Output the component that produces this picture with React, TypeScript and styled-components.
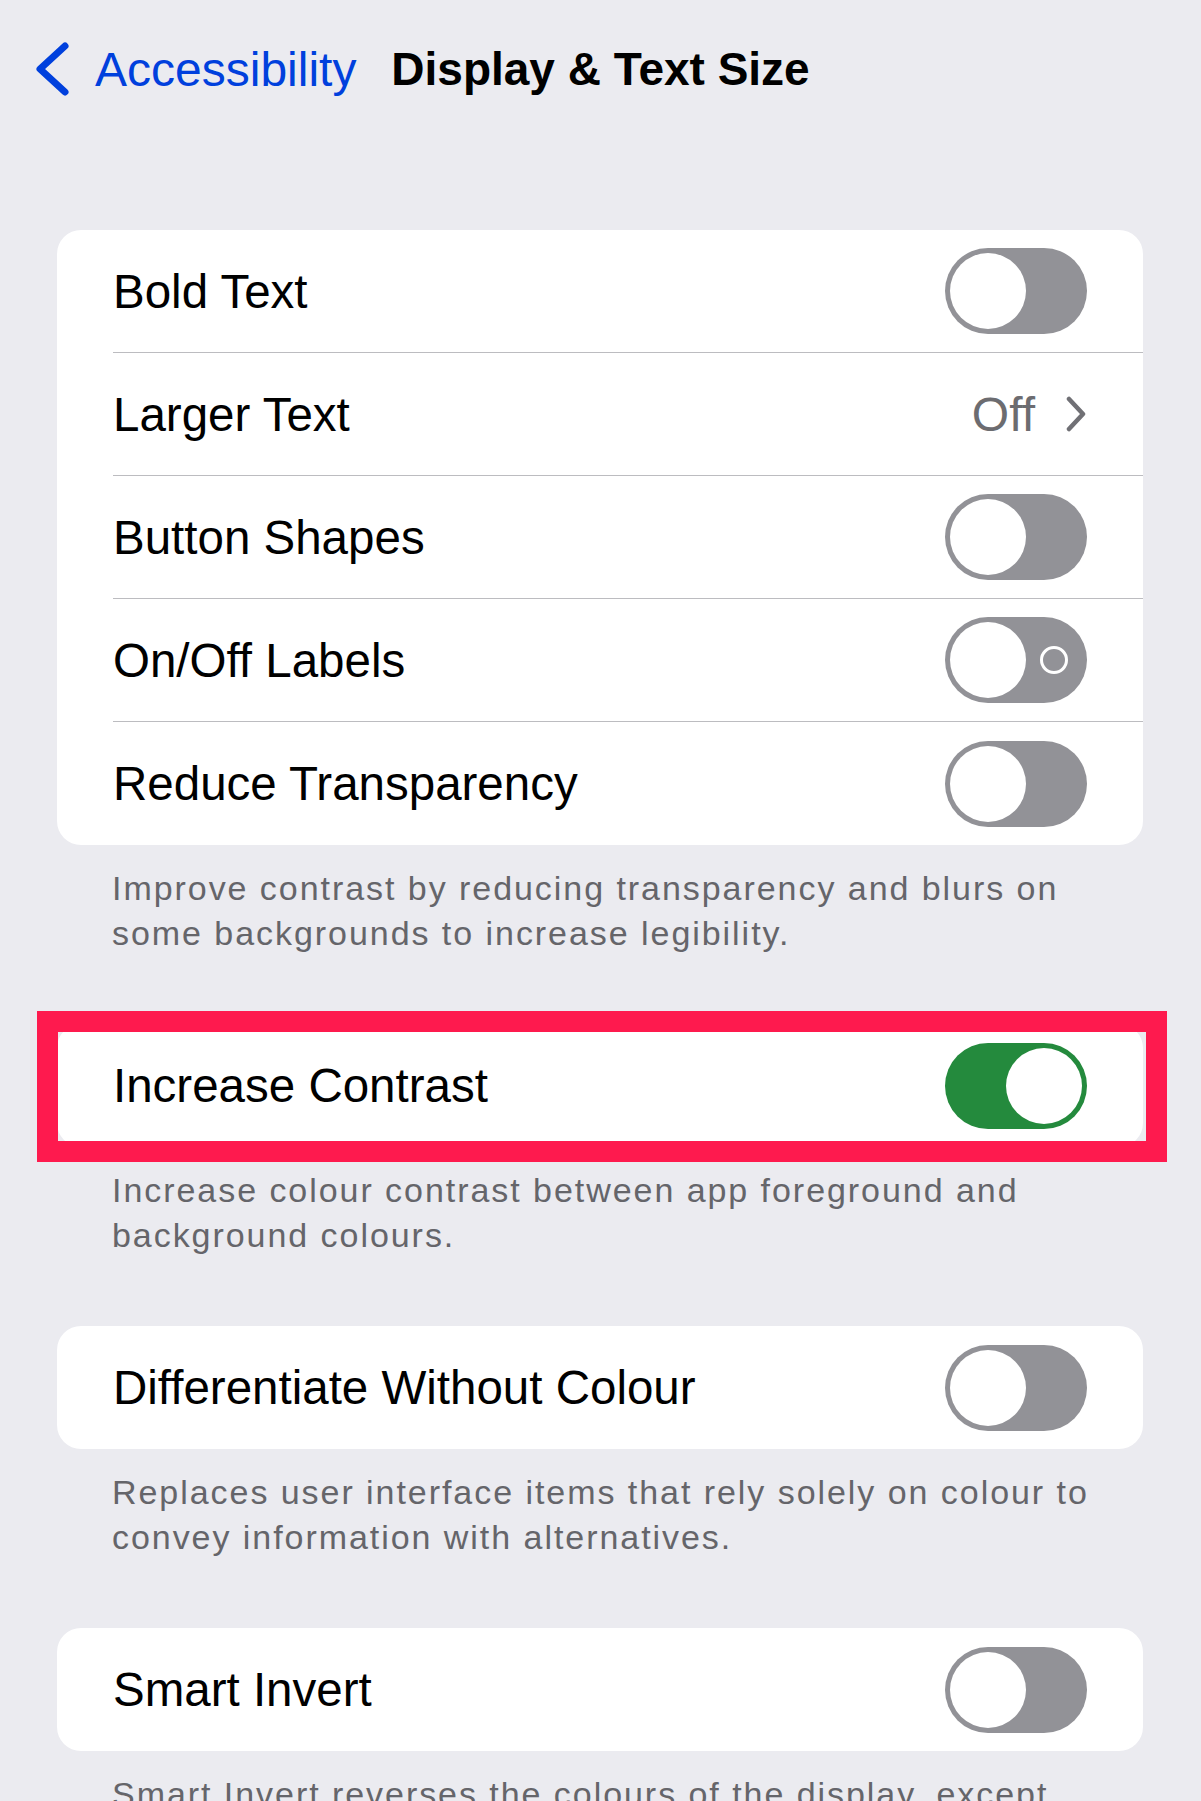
import React from "react";
import styled, { createGlobalStyle } from "styled-components";

const GlobalStyle = createGlobalStyle`
  html, body {
    margin: 0;
    padding: 0;
    background: #ebebf0;
    overflow: hidden;
  }
  body {
    font-family: "Liberation Sans", Arial, sans-serif;
    -webkit-font-smoothing: antialiased;
  }
  * { box-sizing: border-box; }
`;

const Screen = styled.div`
  width: 1201px;
  height: 1801px;
  overflow: hidden;
  background: #ebebf0;
  color: #000;
`;

const NavBar = styled.header`
  display: grid;
  grid-template-columns: 1fr auto 1fr;
  align-items: center;
  height: 138px;
`;

const BackButton = styled.button`
  justify-self: start;
  display: flex;
  align-items: center;
  gap: 25px;
  margin: 0;
  padding: 0 0 0 35px;
  border: 0;
  background: none;
  color: #0040dd;
  font-family: "Liberation Sans", Arial, sans-serif;
  font-size: 48px;
  font-weight: 400;
  cursor: pointer;
`;

const Title = styled.h1`
  margin: 0;
  font-size: 46px;
  font-weight: 700;
  letter-spacing: 0;
  color: #000;
`;

const Content = styled.main`
  padding: 92px 58px 0 57px;
`;

const Group = styled.section`
  margin-bottom: 68px;
`;

const CardWrap = styled.div`
  position: relative;
`;

const Card = styled.div`
  background: #fff;
  border-radius: 24px;
  overflow: hidden;
`;

const Row = styled.div`
  padding-left: 56px;
`;

const RowInner = styled.div<{ $last: boolean }>`
  display: flex;
  align-items: center;
  justify-content: space-between;
  height: 123px;
  padding-right: 56px;
  border-bottom: ${(p) => (p.$last ? "none" : "1px solid #bcbcc0")};
`;

const Label = styled.span`
  font-size: 47.5px;
  color: #000;
`;

const Detail = styled.span`
  display: flex;
  align-items: center;
  gap: 30px;
  font-size: 48px;
  color: #6c6c70;
`;

const Track = styled.span<{ $on: boolean }>`
  display: flex;
  align-items: center;
  justify-content: ${(p) => (p.$on ? "flex-end" : "flex-start")};
  width: 142px;
  height: 86px;
  padding: 0 5px;
  border-radius: 43px;
  background: ${(p) => (p.$on ? "#248a3d" : "#929297")};
`;

const Knob = styled.span`
  width: 76px;
  height: 76px;
  border-radius: 50%;
  background: #fff;
  flex: none;
`;

const OffRing = styled.span`
  width: 28px;
  height: 28px;
  margin-left: auto;
  margin-right: 14px;
  border-radius: 50%;
  border: 3px solid #fff;
  flex: none;
`;

const Footer = styled.p`
  margin: 0;
  padding: 21px 41px 0 55px;
  font-size: 34px;
  line-height: 45px;
  letter-spacing: 1.95px;
  color: #65656a;
`;

const Highlight = styled.div`
  position: absolute;
  top: -13px;
  left: -20px;
  right: -24px;
  bottom: -15px;
  border: 21px solid #fe1a4e;
  pointer-events: none;
`;

const BackChevron = () => (
  <svg width="35" height="56" viewBox="0 0 35 56" fill="none">
    <path
      d="M30 5 L5 28 L30 51"
      stroke="#0040dd"
      strokeWidth="7"
      strokeLinecap="round"
      strokeLinejoin="round"
    />
  </svg>
);

const DisclosureChevron = () => (
  <svg width="22" height="36" viewBox="0 0 22 36" fill="none">
    <path
      d="M4 3 L18 18 L4 33"
      stroke="#707075"
      strokeWidth="4.5"
      strokeLinecap="round"
      strokeLinejoin="round"
    />
  </svg>
);

type Item =
  | { label: string; kind: "toggle"; on?: boolean; labels?: boolean }
  | { label: string; kind: "link"; value: string };

type GroupData = { items: Item[]; footer: string; highlight?: boolean };

const groups: GroupData[] = [
  {
    items: [
      { label: "Bold Text", kind: "toggle" },
      { label: "Larger Text", kind: "link", value: "Off" },
      { label: "Button Shapes", kind: "toggle" },
      { label: "On/Off Labels", kind: "toggle", labels: true },
      { label: "Reduce Transparency", kind: "toggle" },
    ],
    footer:
      "Improve contrast by reducing transparency and blurs on some backgrounds to increase legibility.",
  },
  {
    items: [{ label: "Increase Contrast", kind: "toggle", on: true }],
    footer:
      "Increase colour contrast between app foreground and background colours.",
    highlight: true,
  },
  {
    items: [{ label: "Differentiate Without Colour", kind: "toggle" }],
    footer:
      "Replaces user interface items that rely solely on colour to convey information with alternatives.",
  },
  {
    items: [{ label: "Smart Invert", kind: "toggle" }],
    footer:
      "Smart Invert reverses the colours of the display, except images, media and some apps that use dark colour styles.",
  },
];

const Toggle = ({ on, labels }: { on?: boolean; labels?: boolean }) => (
  <Track $on={!!on} role="switch" aria-checked={!!on}>
    <Knob />
    {labels && !on && <OffRing />}
  </Track>
);

export default function App() {
  return (
    <>
      <GlobalStyle />
      <Screen>
        <NavBar>
          <BackButton>
            <BackChevron />
            Accessibility
          </BackButton>
          <Title>Display &amp; Text Size</Title>
          <span />
        </NavBar>
        <Content>
          {groups.map((g, gi) => (
            <Group key={gi}>
              <CardWrap>
                <Card>
                  {g.items.map((it, i) => (
                    <Row key={it.label}>
                      <RowInner $last={i === g.items.length - 1}>
                        <Label>{it.label}</Label>
                        {it.kind === "toggle" ? (
                          <Toggle on={it.on} labels={it.labels} />
                        ) : (
                          <Detail>
                            {it.value}
                            <DisclosureChevron />
                          </Detail>
                        )}
                      </RowInner>
                    </Row>
                  ))}
                </Card>
                {g.highlight && <Highlight />}
              </CardWrap>
              <Footer>{g.footer}</Footer>
            </Group>
          ))}
        </Content>
      </Screen>
    </>
  );
}
